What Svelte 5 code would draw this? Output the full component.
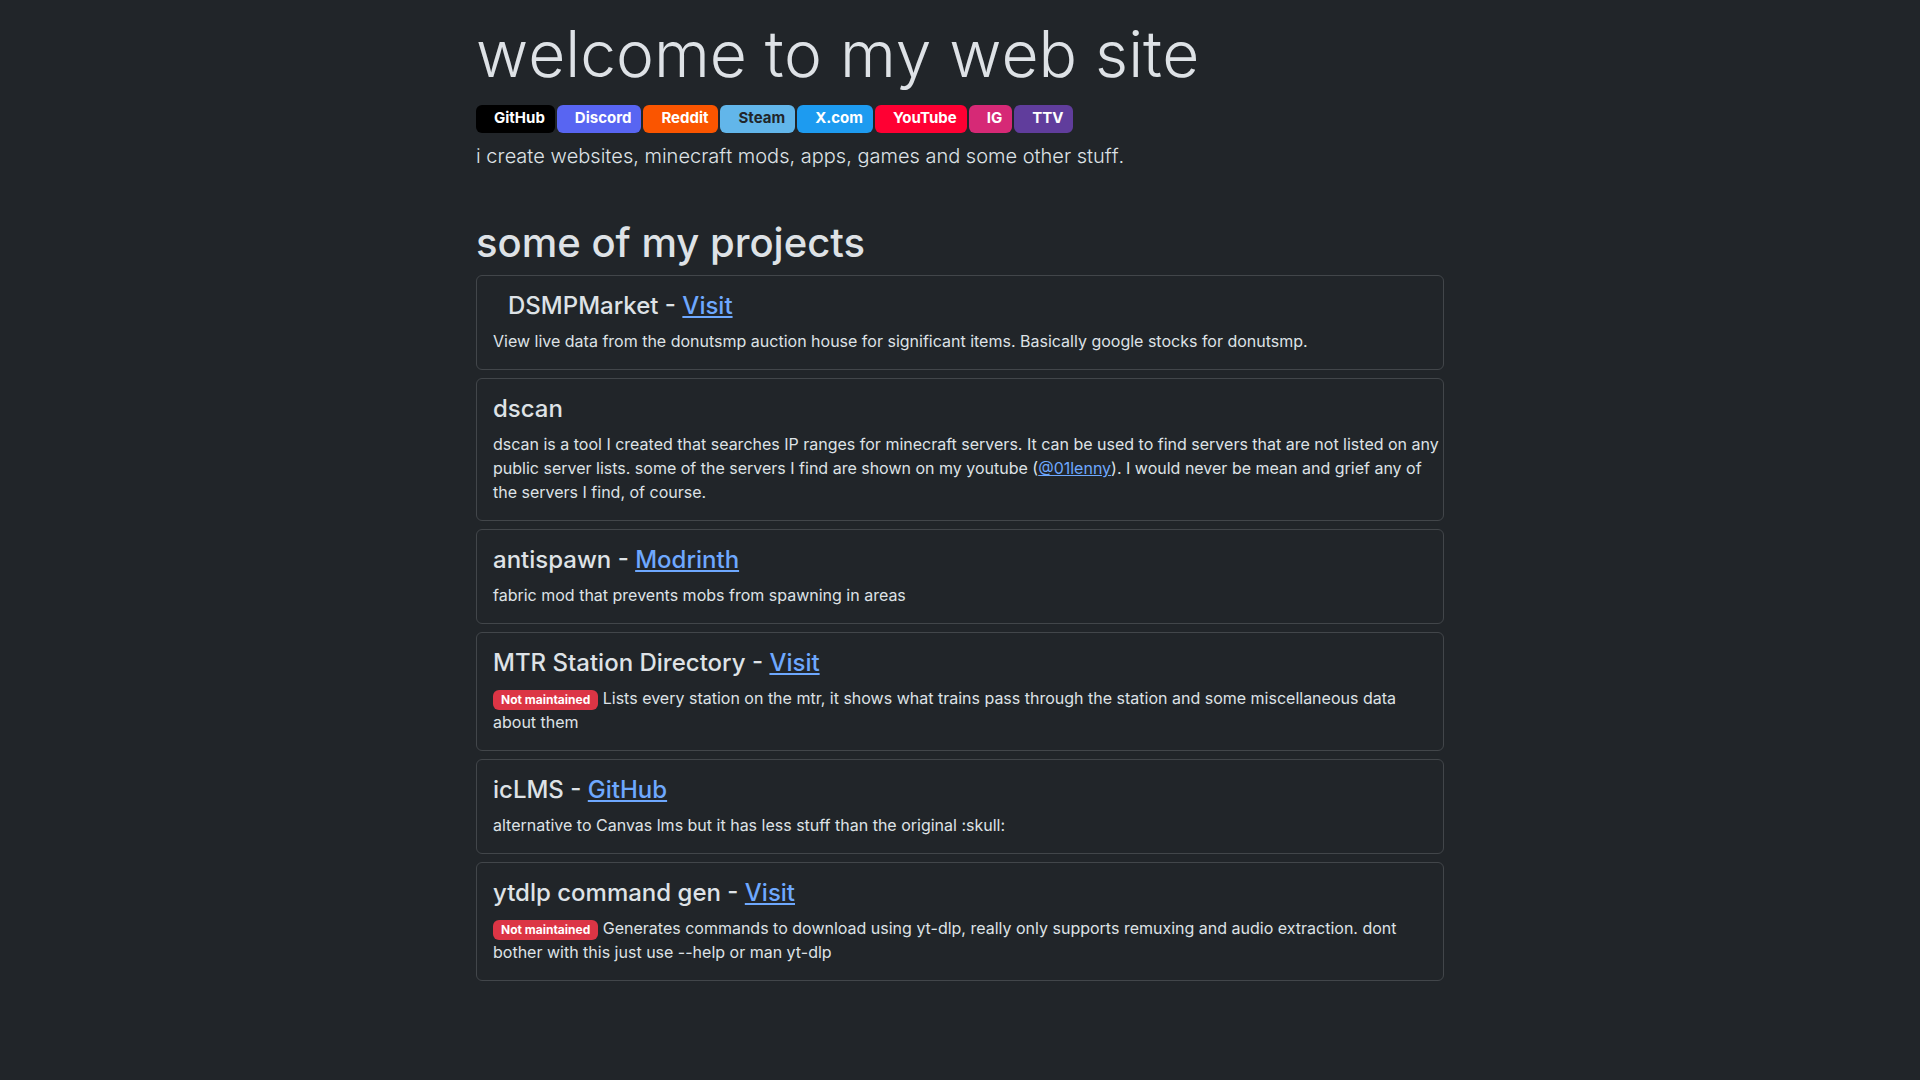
<script>
  const socials = [
    ['GitHub', 'github'],
    ['Discord', 'discord'],
    ['Reddit', 'reddit'],
    ['Steam', 'steam'],
    ['X.com', 'x'],
    ['YouTube', 'youtube'],
    ['IG', 'ig'],
    ['TTV', 'ttv']
  ];
</script>

<main>
  <h1>welcome to my web site</h1>
  <nav>
    {#each socials as [label, kind]}
      <a class="social {kind}" href="#{kind}">{label}</a>
    {/each}
  </nav>
  <p class="lead">i create websites, minecraft mods, apps, games and some other stuff.</p>

  <h2>some of my projects</h2>
  <div class="projects">
    <article>
      <h4 class="with-icon">DSMPMarket - <a href="#dsmpmarket">Visit</a></h4>
      <p>View live data from the donutsmp auction house for significant items. Basically google stocks for donutsmp.</p>
    </article>
    <article>
      <h4>dscan</h4>
      <p>dscan is a tool I created that searches IP ranges for minecraft servers. It can be used to find servers that are not listed on any public server lists. some of the servers I find are shown on my youtube (<a href="#01lenny">@01lenny</a>). I would never be mean and grief any of the servers I find, of course.</p>
    </article>
    <article>
      <h4>antispawn - <a href="#modrinth">Modrinth</a></h4>
      <p>fabric mod that prevents mobs from spawning in areas</p>
    </article>
    <article>
      <h4>MTR Station Directory - <a href="#mtr">Visit</a></h4>
      <p><span class="badge">Not maintained</span> Lists every station on the mtr, it shows what trains pass through the station and some miscellaneous data about them</p>
    </article>
    <article>
      <h4>icLMS - <a href="#iclms">GitHub</a></h4>
      <p>alternative to Canvas lms but it has less stuff than the original :skull:</p>
    </article>
    <article>
      <h4>ytdlp command gen - <a href="#ytdlp">Visit</a></h4>
      <p><span class="badge">Not maintained</span> Generates commands to download using yt-dlp, really only supports remuxing and audio extraction. dont bother with this just use --help or man yt-dlp</p>
    </article>
  </div>
</main>

<style>
  :global(body) {
    margin: 0;
    background: #212529;
    color: #dee2e6;
    font-family: Inter, sans-serif;
    font-size: 16px;
    line-height: 24px;
  }
  main {
    box-sizing: border-box;
    max-width: 992px;
    margin: 0 auto;
    padding: 16px 12px;
  }
  h1, h2, h4, p { margin: 0; }
  h1 {
    font-size: 64px;
    font-weight: 300;
    font-kerning: none;
    line-height: 75px;
    margin-bottom: 14px;
  }
  nav {
    display: flex;
    flex-wrap: wrap;
    gap: 2px;
    margin-bottom: 8px;
  }
  .social {
    padding: 3px 10px 5px 18px;
    border-radius: 6px;
    color: #fff;
    font-size: 15px;
    font-weight: 700;
    line-height: 20px;
    text-decoration: none;
  }
  .github { background: #000; }
  .discord { background: #5865f2; }
  .reddit { background: #fa5500; }
  .steam { background: #62b6ea; color: #212529; }
  .x { background: #1d9bf0; }
  .youtube { background: #ff0033; }
  .ig { background: #d62976; }
  .ttv { background: #603d9c; }
  .lead {
    font-size: 20px;
    font-weight: 300;
    font-kerning: none;
    line-height: 30px;
    margin-bottom: 48px;
  }
  h2 {
    font-size: 40px;
    font-weight: 500;
    line-height: 48px;
    margin-bottom: 8px;
  }
  .projects {
    display: flex;
    flex-direction: column;
    gap: 8px;
  }
  article {
    padding: 16px 4px 16px 16px;
    border: 1px solid #42464a;
    border-radius: 6px;
  }
  h4 {
    font-size: 24px;
    font-weight: 500;
    line-height: 27px;
    margin-bottom: 10px;
  }
  .with-icon { padding-left: 15px; }
  article a { color: #6ea8fe; }
  .badge {
    display: inline-block;
    padding: 4px 8px;
    border-radius: 6px;
    background: #dc3545;
    color: #fff;
    font-size: 12px;
    font-weight: 700;
    line-height: 12px;
    vertical-align: baseline;
  }
</style>
